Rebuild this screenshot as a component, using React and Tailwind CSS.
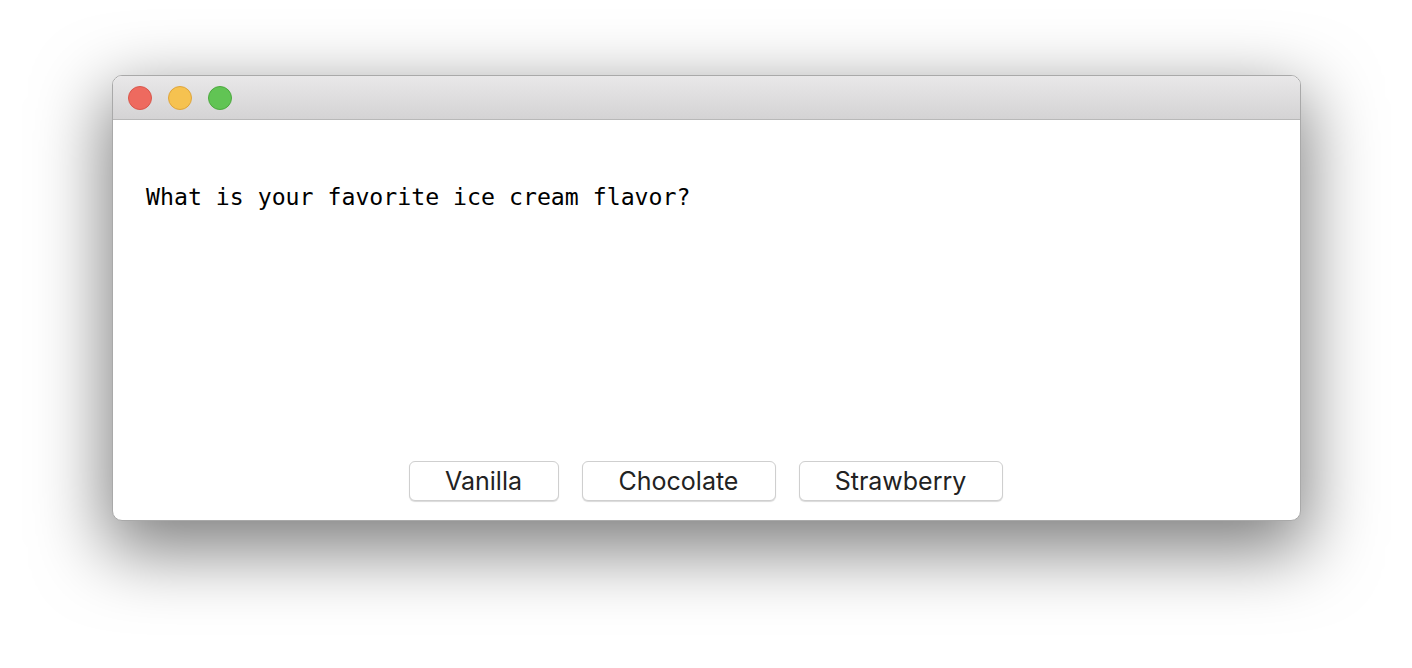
export default function App() {
  const flavors = [
    { name: "Vanilla", w: "w-[150px]" },
    { name: "Chocolate", w: "w-[194px]" },
    { name: "Strawberry", w: "w-[204px]" },
  ];

  return (
    <div className="w-[1412px] h-[668px] bg-white pt-[75px] pl-[112px]">
      <div className="w-[1189px] h-[446px] rounded-[10px] border border-[#a9a9a9] bg-white flex flex-col overflow-hidden shadow-[0_24px_70px_6px_rgba(0,0,0,0.5)]">
        {/* title bar */}
        <div className="h-[44px] shrink-0 flex items-center gap-[16px] pl-[15px] border-b border-[#b8b8b8] bg-gradient-to-b from-[#e9e8e9] to-[#d4d3d4]">
          <span className="w-[24px] h-[24px] rounded-full bg-[#ee6a5f] border border-[#d9574c]" />
          <span className="w-[24px] h-[24px] rounded-full bg-[#f6c250] border border-[#dfa53c]" />
          <span className="w-[24px] h-[24px] rounded-full bg-[#61c454] border border-[#4da93f]" />
        </div>

        {/* content */}
        <div className="flex-1 flex flex-col px-[33px] pt-[62px] pb-[19px]">
          <p className="text-[23.2px] leading-[30px] text-black font-['DejaVu_Sans_Mono',monospace]">
            What is your favorite ice cream flavor?
          </p>
          <div className="mt-auto flex justify-center gap-[23px] pr-[2px]">
            {flavors.map(f => (
              <button
                key={f.name}
                className={`${f.w} h-[40px] rounded-[6px] bg-white border border-[#cfcfcf] shadow-[0_1px_1px_rgba(0,0,0,0.15)] text-[25px] leading-[38px] text-[#222] font-['Inter',sans-serif]`}
              >
                {f.name}
              </button>
            ))}
          </div>
        </div>
      </div>
    </div>
  );
}
